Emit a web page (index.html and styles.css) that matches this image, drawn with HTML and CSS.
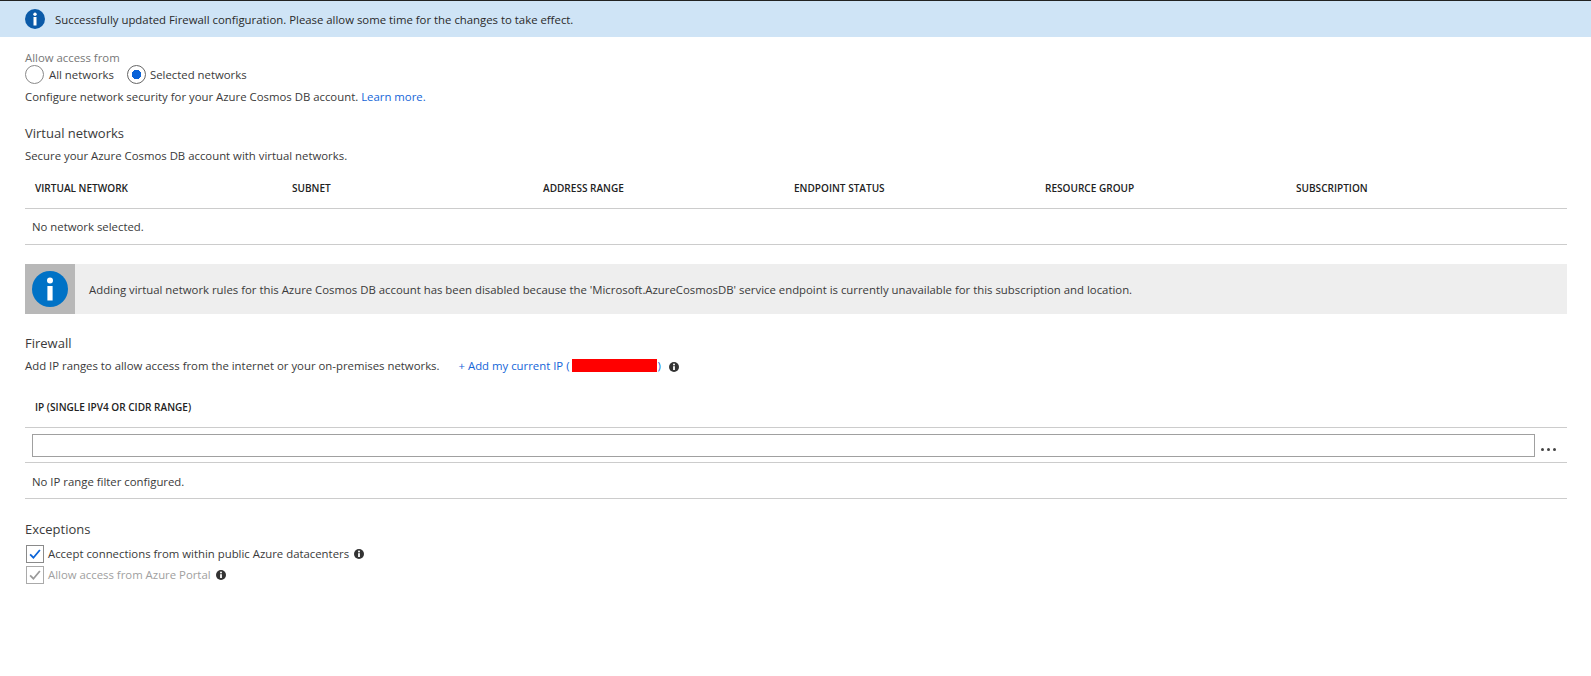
FILE: index.html
```html
<!DOCTYPE html>
<html lang="en">
<head>
    <meta charset="UTF-8">
    <title>Firewall and virtual networks</title>
    <link rel="stylesheet" href="styles.css">
</head>
<body>

    <div class="banner">
        <svg class="banner-icon" viewBox="0 0 20 20"><circle cx="10" cy="10" r="10" fill="#0b5aa8"/><circle cx="10" cy="5.2" r="1.7" fill="#fff"/><rect x="8.5" y="8" width="3" height="8.5" fill="#fff"/></svg>
        <span>Successfully updated Firewall configuration. Please allow some time for the changes to take effect.</span>
    </div>

    <div class="content">
        <div class="muted-label">Allow access from</div>
        <div class="radio-row">
            <div class="radio"></div>
            <span class="radio-text">All networks</span>
            <div class="radio radio-on"></div>
            <span>Selected networks</span>
        </div>
        <div class="help-line">Configure network security for your Azure Cosmos DB account. <a class="link" href="#">Learn more.</a></div>

        <h2 class="section-title first">Virtual networks</h2>
        <div class="section-desc">Secure your Azure Cosmos DB account with virtual networks.</div>

        <div class="table-head network-cols">
            <div>VIRTUAL NETWORK</div>
            <div>SUBNET</div>
            <div>ADDRESS RANGE</div>
            <div>ENDPOINT STATUS</div>
            <div>RESOURCE GROUP</div>
            <div>SUBSCRIPTION</div>
        </div>
        <div class="table-row">No network selected.</div>

        <div class="notice">
            <div class="notice-side">
                <svg viewBox="0 0 36 36" width="36" height="36"><circle cx="18" cy="18" r="18" fill="#0072c6"/><circle cx="18" cy="9.5" r="3" fill="#fff"/><rect x="15.4" y="15" width="5.2" height="14.5" fill="#fff"/></svg>
            </div>
            <div class="notice-text">Adding virtual network rules for this Azure Cosmos DB account has been disabled because the 'Microsoft.AzureCosmosDB' service endpoint is currently unavailable for this subscription and location.</div>
        </div>

        <h2 class="section-title firewall">Firewall</h2>
        <div class="firewall-desc">
            <span>Add IP ranges to allow access from the internet or your on-premises networks.</span>
            <a class="link add-ip" href="#">+ Add my current IP (<span class="redacted"></span>)</a>
            <svg class="info-icon" viewBox="0 0 10 10"><circle cx="5" cy="5" r="5" fill="#333"/><circle cx="5" cy="2.6" r="1" fill="#fff"/><rect x="4.1" y="4.2" width="1.8" height="3.8" fill="#fff"/></svg>
        </div>

        <div class="table-head ip-head">IP (SINGLE IPV4 OR CIDR RANGE)</div>
        <div class="input-row">
            <input class="ip-input" type="text">
            <div class="more"><i></i><i></i><i></i></div>
        </div>
        <div class="table-row ip-empty">No IP range filter configured.</div>

        <h2 class="section-title exceptions">Exceptions</h2>
        <div class="check-list">
            <div class="check-row">
                <div class="checkbox"><svg viewBox="0 0 18 18"><path d="M3.5 9.5 L7.2 13.2 L14.5 4.5" fill="none" stroke="#0a63d8" stroke-width="2"/></svg></div>
                <span>Accept connections from within public Azure datacenters</span>
                <svg class="info-icon" viewBox="0 0 10 10"><circle cx="5" cy="5" r="5" fill="#333"/><circle cx="5" cy="2.6" r="1" fill="#fff"/><rect x="4.1" y="4.2" width="1.8" height="3.8" fill="#fff"/></svg>
            </div>
            <div class="check-row disabled">
                <div class="checkbox"><svg viewBox="0 0 18 18"><path d="M3.5 9.5 L7.2 13.2 L14.5 4.5" fill="none" stroke="#9a9a9a" stroke-width="2"/></svg></div>
                <span>Allow access from Azure Portal</span>
                <svg class="info-icon" viewBox="0 0 10 10"><circle cx="5" cy="5" r="5" fill="#333"/><circle cx="5" cy="2.6" r="1" fill="#fff"/><rect x="4.1" y="4.2" width="1.8" height="3.8" fill="#fff"/></svg>
            </div>
        </div>
    </div>

</body>
</html>
```

FILE: styles.css
```css
body {
    font-family: "Open Sans", "Noto Sans", Arial, sans-serif;
    font-size: 11.36px;
    color: #3a3a3a;
    background: #fff;
    margin: 0;
}
.banner {
    display: flex;
    align-items: center;
    height: 36px;
    padding-left: 25px;
    background: #cfe4f6;
    border-top: 1px solid #222;
    color: #2a2a2a;
}
.banner-icon {
    width: 20px;
    height: 20px;
    margin-right: 10px;
}
.content {
    padding: 14px 24px 0 25px;
}
.muted-label {
    height: 13px;
    line-height: 14px;
    color: #777;
}
.radio-row {
    display: flex;
    align-items: center;
    height: 20px;
}
.radio {
    box-sizing: border-box;
    width: 19px;
    height: 19px;
    margin-right: 5px;
    border: 1px solid #8a8a8a;
    border-radius: 50%;
}
.radio-on {
    margin-right: 4px;
    border-color: #666;
    background: radial-gradient(circle, #0a63d8 0, #0a63d8 4.5px, #fff 5px);
}
.radio-text {
    margin-right: 13px;
}
.help-line {
    margin-top: 4px;
    height: 18px;
    line-height: 18px;
}
.link {
    color: #1565d8;
    text-decoration: none;
}
.section-title {
    margin: 0;
    font-size: 13px;
    font-weight: 400;
    height: 20px;
    line-height: 18px;
    color: #3a3a3a;
}
.section-title.first {
    margin-top: 18px;
}
.section-title.firewall {
    margin-top: 20px;
}
.section-title.exceptions {
    margin-top: 21px;
}
.section-desc {
    margin-top: 3px;
    height: 18px;
    line-height: 18px;
}
.table-head {
    font-size: 10.05px;
    font-weight: 600;
    color: #222;
}
.network-cols {
    display: grid;
    grid-template-columns: 257px repeat(5, 251px);
    align-items: center;
    height: 41px;
    margin-top: 2px;
    padding-left: 10px;
    border-bottom: 1px solid #ccc;
}
.table-row {
    display: flex;
    align-items: center;
    height: 35px;
    padding-left: 7px;
    border-bottom: 1px solid #ccc;
}
.notice {
    display: flex;
    height: 50px;
    margin-top: 19px;
    background: #eee;
}
.notice-side {
    display: flex;
    align-items: center;
    justify-content: center;
    width: 50px;
    background: #b8b8b8;
}
.notice-text {
    display: flex;
    align-items: center;
    margin-left: 14px;
}
.firewall-desc {
    display: flex;
    align-items: center;
    margin-top: 2px;
    height: 18px;
}
.add-ip {
    display: flex;
    align-items: center;
    margin-left: 19px;
}
.redacted {
    display: inline-block;
    width: 85px;
    height: 13px;
    margin: 0 1px 0 2px;
    background: #f00;
}
.info-icon {
    width: 10px;
    height: 10px;
    margin-left: 5px;
}
.firewall-desc .info-icon {
    margin: 3px 0 0 8px;
}
.ip-head {
    display: flex;
    align-items: center;
    height: 40px;
    margin-top: 13px;
    padding-left: 10px;
    border-bottom: 1px solid #ccc;
}
.input-row {
    display: flex;
    align-items: center;
    height: 34px;
    padding-left: 7px;
    border-bottom: 1px solid #ccc;
}
.ip-input {
    box-sizing: border-box;
    flex: 1;
    height: 23px;
    margin: 0;
    padding: 0 4px;
    border: 1px solid #a0a0a0;
    border-radius: 0;
    outline: none;
}
.more {
    display: flex;
    gap: 3px;
    width: 32px;
    padding: 8px 0 0 6px;
    box-sizing: border-box;
}
.more i {
    width: 3px;
    height: 3px;
    border-radius: 50%;
    background: #444;
}
.ip-empty {
    height: 34px;
    padding-top: 1px;
}
.check-list {
    margin-top: 3px;
}
.check-row {
    display: flex;
    align-items: center;
    height: 21px;
}
.check-row.disabled {
    color: #a0a0a0;
}
.checkbox {
    box-sizing: border-box;
    width: 18px;
    height: 18px;
    margin: 0 4px 0 1px;
    border: 1px solid #8a8a8a;
}
.check-row.disabled .checkbox {
    border-color: #aaa;
}
.checkbox svg {
    display: block;
    width: 16px;
    height: 16px;
}
```
